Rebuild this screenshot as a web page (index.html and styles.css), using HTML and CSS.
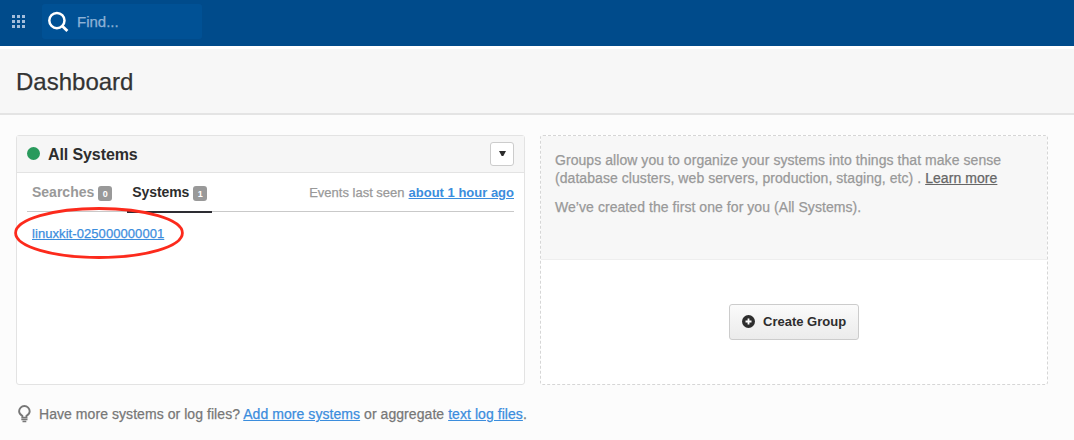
FILE: index.html
```html
<!DOCTYPE html>
<html lang="en">
<head>
<meta charset="utf-8">
<title>Dashboard</title>
<link rel="stylesheet" href="styles.css">
</head>
<body>
<header class="topbar">
  <svg class="apps" width="13" height="13" viewBox="0 0 13 13" fill="#a3bddb"><path d="M0 0h3v3H0zM5 0h3v3H5zM10 0h3v3h-3zM0 5h3v3H0zM5 5h3v3H5zM10 5h3v3h-3zM0 10h3v3H0zM5 10h3v3H5zM10 10h3v3h-3z"/></svg>
  <div class="search">
    <svg width="22" height="22" viewBox="0 0 22 22" fill="none" stroke="#fff" stroke-width="2.5"><circle cx="8.9" cy="9.6" r="7.6"/><path d="M14.5 15.2l4.9 4.9" stroke-width="2.8"/></svg>
    <span class="find">Find...</span>
  </div>
</header>
<div class="titlebar"><h1 class="title">Dashboard</h1></div>
<main class="content">
  <section class="card">
    <div class="card-head">
      <span class="status"></span>
      <h2 class="card-title">All Systems</h2>
      <button class="menu" aria-label="Group options"><svg width="7" height="5" viewBox="0 0 7 5"><path d="M0 0h7L4.3 5H2.7z" fill="#2c2c2c"/></svg></button>
    </div>
    <div class="tabs">
      <div class="tab"><span class="tab-name searches">Searches</span><span class="badge">0</span></div>
      <div class="tab active"><span class="tab-name systems">Systems</span><span class="badge">1</span></div>
      <div class="seen"><span class="seen-label">Events last seen</span><a class="seen-link" href="#">about 1 hour ago</a></div>
    </div>
    <div class="systems-list">
      <a class="system" href="#">linuxkit-025000000001</a>
      <svg class="ring" width="172" height="54" viewBox="0 0 172 54" fill="none" stroke="#fc2a1c" stroke-width="2.8"><ellipse cx="86" cy="27" rx="83.4" ry="24.5"/></svg>
    </div>
  </section>
  <section class="groups">
    <div class="groups-info">
      <p class="para">Groups allow you to organize your systems into things that make sense<br>(database clusters, web servers, production, staging, etc) . <a class="learn" href="#">Learn more</a></p>
      <p class="para">We’ve created the first one for you (All Systems).</p>
    </div>
    <div class="groups-action">
      <button class="create"><svg width="13" height="13" viewBox="0 0 13 13"><circle cx="6.5" cy="6.5" r="6.5" fill="#2d2d2d"/><path d="M6.5 3.5v6M3.5 6.5h6" stroke="#fff" stroke-width="1.8"/></svg><span class="create-label">Create Group</span></button>
    </div>
  </section>
</main>
<footer class="hint">
  <svg class="bulb" width="13" height="18" viewBox="0 0 13 18" fill="none" stroke="#777" stroke-width="1.9"><path d="M4.3 12.6v-1.7C2.4 9.8 1.1 8.4 1.1 6.3a5.3 5.3 0 0 1 10.6 0c0 2.1-1.2 3.5-3.2 4.6v1.7z"/><path d="M3.3 14.6h6.2M4.5 16.6h3.8" stroke-width="1.5"/></svg>
  <span class="hint-text">Have more systems or log files? <a class="link" href="#">Add more systems</a> or aggregate <a class="link" href="#">text log files</a>.</span>
</footer>
</body>
</html>
```

FILE: styles.css
```css
* { box-sizing: border-box; }
body { margin: 0; height: 440px; overflow: hidden; background: #fcfcfc; font: 14px "Liberation Sans", Arial, sans-serif; color: #2d2d2d; }
h1, h2, p { margin: 0; }
button { font-family: inherit; }
svg { display: block; flex: none; }
.title, .find, .seen-label, .system, .para, .hint-text { -webkit-text-stroke: .25px; }
.topbar { height: 46px; padding: 4px 0 0 12px; display: flex; align-items: flex-start; background: #004b8b; }
.apps { margin-top: 11px; }
.search { display: flex; align-items: center; width: 160px; height: 35px; margin-left: 17px; padding-left: 6px; border-radius: 3px; background: #005195; }
.find { margin-left: 7px; font-size: 15px; line-height: 20px; color: #8eb2d6; }
.titlebar { height: 69px; padding-top: 17px; border-top: 3px solid #fff; border-bottom: 2px solid #e4e4e4; background: #f7f7f7; }
.title { padding-left: 16px; font-size: 24px; font-weight: 400; line-height: 32px; color: #333; }
.content { display: flex; gap: 15px; padding: 20px 26px 0 16px; }
.card { width: 509px; height: 250px; border: 1px solid #e3e3e3; border-radius: 3px; background: #fff; }
.card-head { display: flex; align-items: center; height: 37px; padding: 0 10px; background: #f6f6f6; border-bottom: 1px solid #e3e3e3; }
.status { width: 13px; height: 13px; margin-bottom: 1px; border-radius: 50%; background: #299a5c; }
.card-title { margin-left: 8px; padding-top: 2px; font-size: 16px; line-height: 20px; letter-spacing: -.1px; }
.menu { display: flex; align-items: center; justify-content: center; width: 24px; height: 24px; margin-left: auto; padding: 0 0 2px; border: 1px solid #ccc; border-radius: 3px; background: #fff; }
.tabs { display: flex; height: 39px; margin: 0 10px; border-bottom: 1px solid #c9c9c9; }
.tab { display: flex; height: 40px; padding: 9px 5px 0; font-size: 14px; font-weight: 700; line-height: 20px; color: #999; }
.tab.active { width: 85px; margin-left: 10px; border-bottom: 2px solid #2d2d33; }
.active .tab-name { color: #2d2d2d; letter-spacing: -.1px; }
.badge { flex: none; width: 14px; height: 15px; margin: 4px 0 0 4px; border-radius: 3px; background: #999; color: #fff; font-size: 9px; line-height: 16px; text-align: center; }
.seen { display: flex; gap: 4px; margin-left: auto; padding-top: 10px; font-size: 13px; line-height: 20px; color: #999; }
.seen-link { font-weight: 700; color: #3b8ddd; }
.systems-list { position: relative; padding: 12px 15px; font-size: 13px; line-height: 20px; }
.system, .link { color: #3b8ddd; }
.system { letter-spacing: .07px; }
.ring { position: absolute; left: -4px; top: -6px; }
.groups { width: 508px; height: 250px; border: 1px dashed #d6d6d6; border-radius: 3px; background: #fff; }
.groups-info { height: 124px; padding: 15px 14px 0; background: #f7f7f7; border-bottom: 1px solid #eee; color: #999; }
.para { line-height: 18px; margin-bottom: 11px; white-space: nowrap; letter-spacing: .06px; }
.learn { color: #666; }
.groups-action { display: flex; justify-content: center; padding-top: 44px; }
.create { display: flex; align-items: center; width: 130px; height: 36px; padding: 0 0 1px 12px; border: 1px solid #ccc; border-radius: 3px; background: linear-gradient(#fbfbfb, #ebebeb); color: #2d2d2d; }
.create-label { margin-left: 8px; font-size: 13px; font-weight: 700; white-space: nowrap; }
.hint { display: flex; padding: 19px 0 0 18px; line-height: 20px; color: #777; }
.bulb { margin-top: 1px; }
.hint-text { margin-left: 8px; white-space: nowrap; letter-spacing: .06px; }
```
